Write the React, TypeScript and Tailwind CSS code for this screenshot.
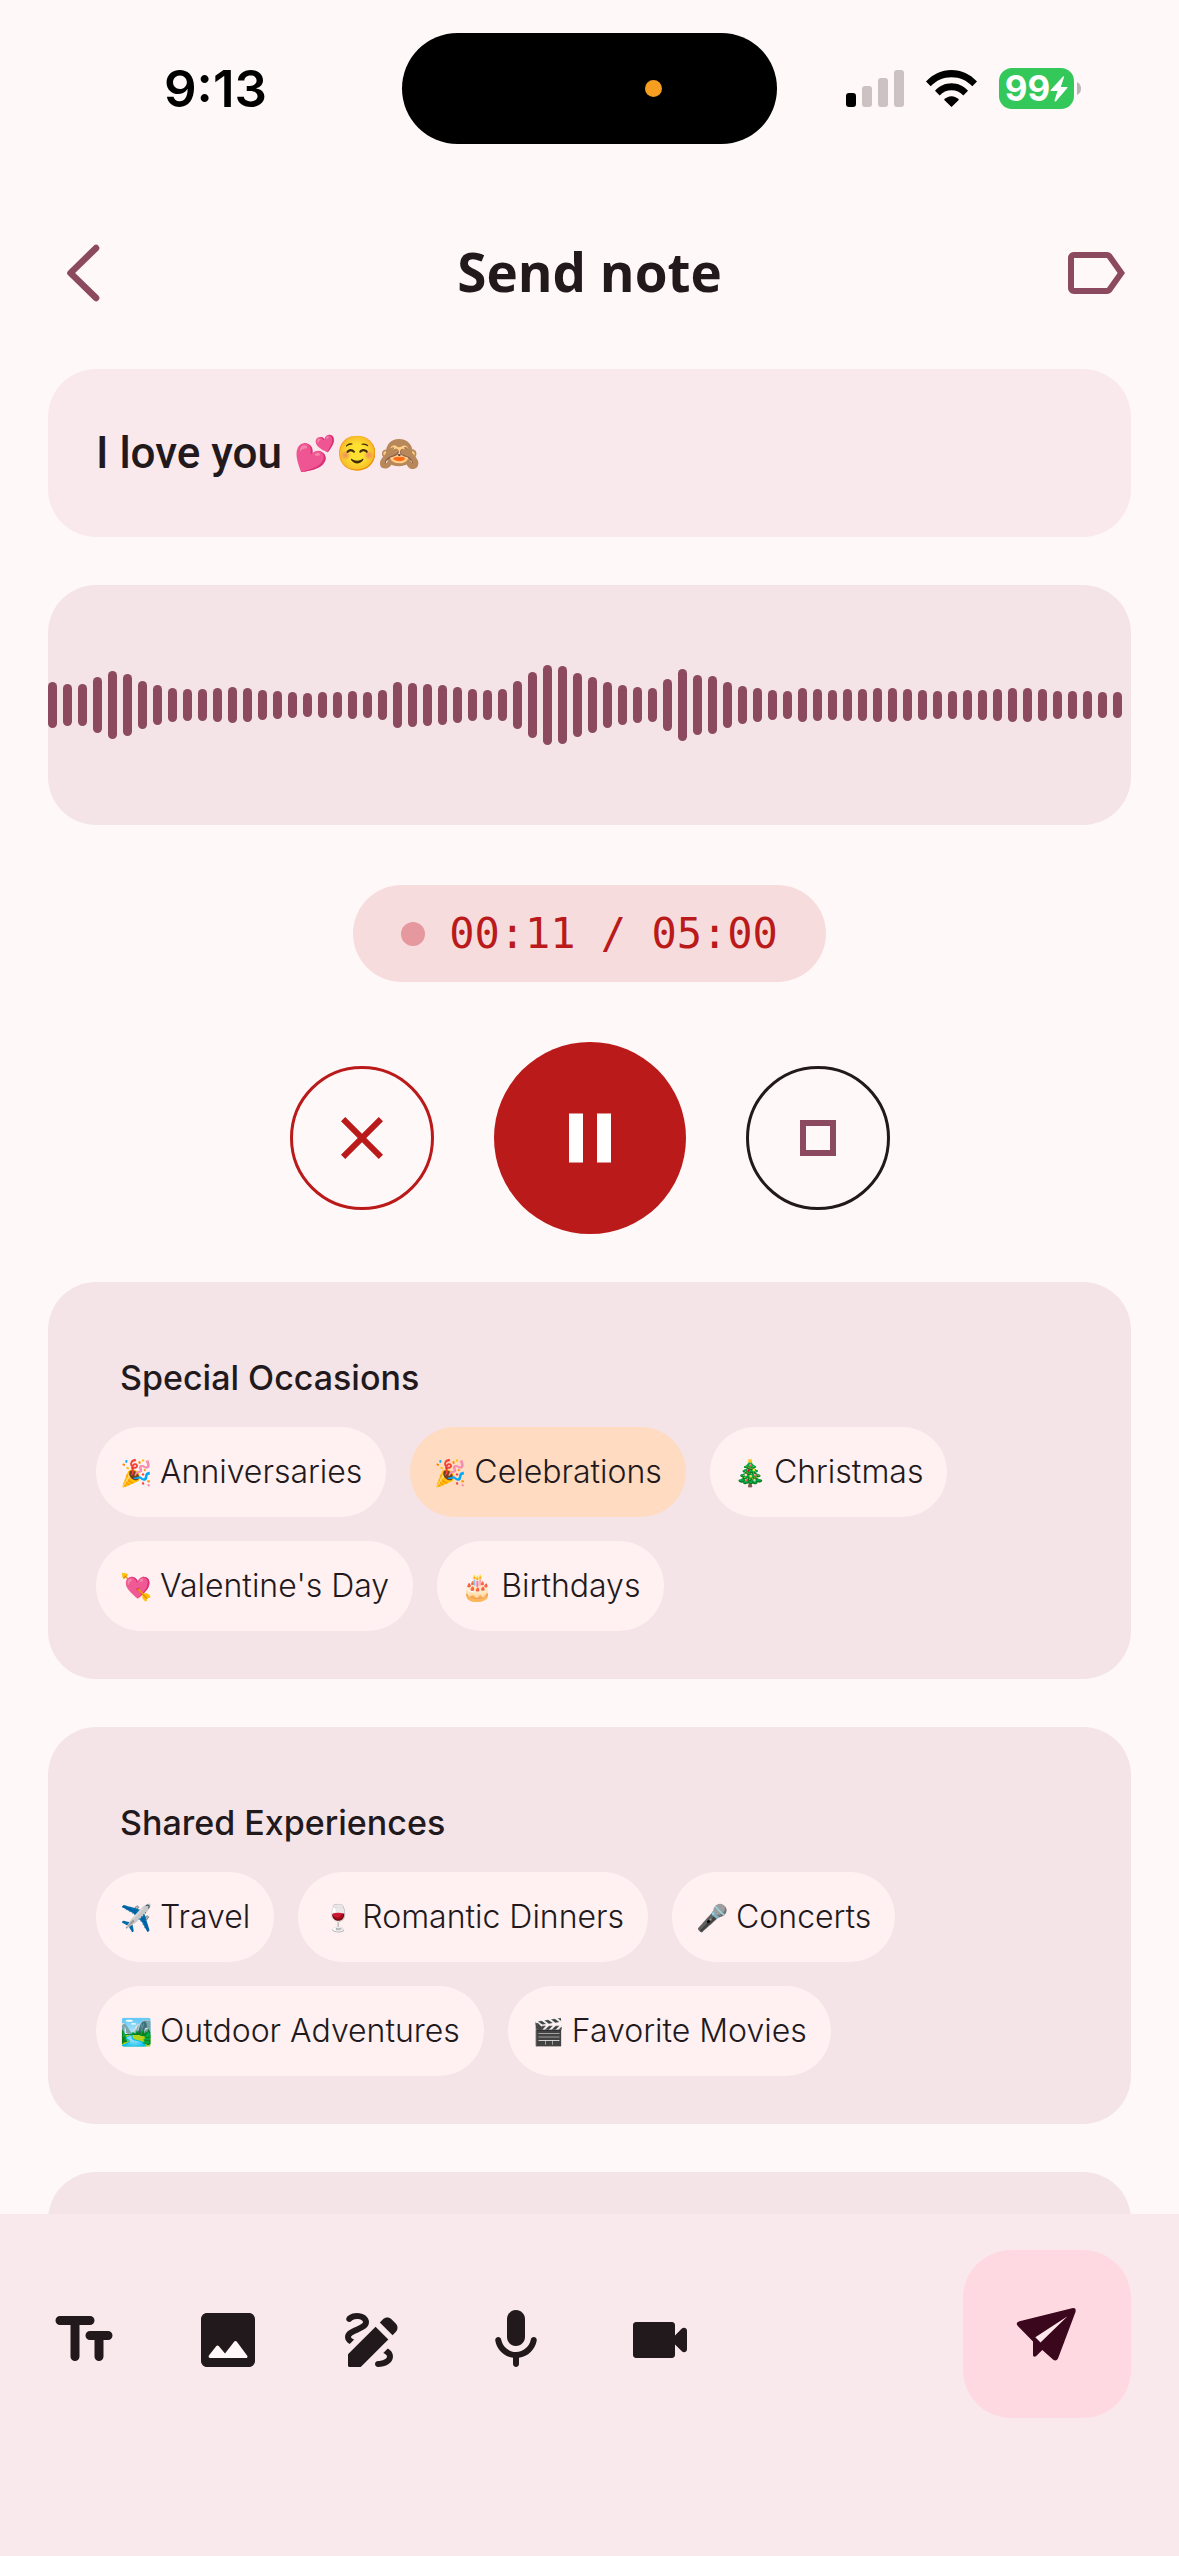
import React, { useState } from 'react';

const waveform = [
  46, 42, 42, 56, 68, 62, 48, 40, 34, 32, 32, 34, 36, 34, 30, 28, 26, 24, 26, 26, 28, 26, 30, 46,
  44, 42, 40, 36, 32, 30, 32, 48, 66, 80, 78, 64, 56, 46, 40, 36, 34, 52, 72, 60, 58, 46, 38, 34,
  30, 28, 34, 32, 30, 32, 32, 34, 34, 32, 30, 28, 28, 30, 30, 32, 34, 34, 32, 28, 28, 28, 26, 26,
];

const categories = [
  {
    title: 'Special Occasions',
    tags: [
      { emoji: '🎉', label: 'Anniversaries' },
      { emoji: '🎉', label: 'Celebrations' },
      { emoji: '🎄', label: 'Christmas' },
      { emoji: '💘', label: "Valentine's Day" },
      { emoji: '🎂', label: 'Birthdays' },
    ],
  },
  {
    title: 'Shared Experiences',
    tags: [
      { emoji: '✈️', label: 'Travel' },
      { emoji: '🍷', label: 'Romantic Dinners' },
      { emoji: '🎤', label: 'Concerts' },
      { emoji: '🏞️', label: 'Outdoor Adventures' },
      { emoji: '🎬', label: 'Favorite Movies' },
    ],
  },
];

interface IconProps {
  className?: string;
  children: React.ReactNode;
}

const Icon: React.FC<IconProps> = ({ className = 'size-[72px]', children }) => (
  <svg viewBox="0 0 24 24" fill="currentColor" aria-hidden="true" className={className}>
    {children}
  </svg>
);

const StatusBar = () => (
  <div className="grid h-[177px] shrink-0 grid-cols-[1fr_375px_1fr] items-center text-black">
    <span className="pl-[164px] font-['Inter'] text-[51px] leading-none font-semibold">9:13</span>
    <div className="flex h-[111px] items-center justify-end rounded-full bg-black pr-[115px]">
      <span className="size-[17px] rounded-full bg-[#f59e1f]" />
    </div>
    <div className="flex items-center justify-end gap-[22px] pr-[98px]">
      <svg viewBox="0 0 58 37" className="h-[37px] w-[58px]" aria-hidden="true">
        <rect x="0" y="23" width="10" height="14" rx="3" />
        <rect x="16" y="16" width="10" height="21" rx="3" fill="#cdc2c3" />
        <rect x="32" y="8" width="10" height="29" rx="3" fill="#cdc2c3" />
        <rect x="48" y="0" width="10" height="37" rx="3" fill="#cdc2c3" />
      </svg>
      <svg viewBox="0 0 51 37" className="h-[37px] w-[51px]" aria-hidden="true">
        <path d="M0 11.5C6.8 4.2 15.6 0 25.5 0S44.2 4.2 51 11.5L46.3 16.2C40.8 10.4 33.6 7.2 25.5 7.2S10.2 10.4 4.7 16.2Z" />
        <path d="M9 20.7C13.4 15.9 19 13.2 25.5 13.2S37.6 15.9 42 20.7L37.3 25.4C34.2 22 30.2 20.2 25.5 20.2S16.8 22 13.7 25.4Z" />
        <path d="M18 29.7C20 27.5 22.6 26.2 25.5 26.2S31 27.5 33 29.7L25.5 37Z" />
      </svg>
      <div className="flex items-center gap-[3px]">
        <div className="flex h-[41px] w-[75px] items-center justify-center rounded-[13px] bg-[#34c759] text-white">
          <span className="font-['Inter'] text-[35px] leading-none font-bold">99</span>
          <svg viewBox="0 0 18 26" className="h-[26px] w-[18px]" fill="currentColor" aria-hidden="true">
            <path d="M13 0.5 0.5 14.2Q0 15 1 15H7.5L4.5 24.5Q4.8 26 6 25.2L17.5 11.8Q18 11 17 11H10.8L14 1.2Q14 0 13 0.5Z" />
          </svg>
        </div>
        <svg viewBox="0 0 4 13" className="h-[13px] w-1" fill="#bdb2b4" aria-hidden="true">
          <path d="M0 0Q4 2 4 6.5T0 13Z" />
        </svg>
      </div>
    </div>
  </div>
);

const Header = () => (
  <header className="flex h-48 shrink-0 items-center justify-between px-12 text-[#8c4a60]">
    <button type="button" aria-label="Back">
      <Icon>
        <path d="M16 3.7 7.5 12 16 20.3" fill="none" stroke="currentColor" strokeWidth="2.2" strokeLinecap="round" strokeLinejoin="round" />
      </Icon>
    </button>
    <h1 className="pb-1 text-[53px] leading-none font-bold text-[#22191c]">Send note</h1>
    <button type="button" aria-label="Label">
      <Icon>
        <path d="M17.63 5.84C17.27 5.33 16.67 5 16 5L5 5.01C3.9 5.01 3 5.9 3 7v10c0 1.1.9 1.99 2 1.99L16 19c.67 0 1.27-.33 1.63-.84L22 12l-4.37-6.16zM16 17H5V7h11l3.55 5L16 17z" />
      </Icon>
    </button>
  </header>
);

const Recorder = () => (
  <div className="flex flex-col items-center">
    <div className="flex h-60 w-full items-center justify-between overflow-hidden rounded-[48px] bg-[#f4e4e7] pr-[9px]">
      {waveform.map((height, index) => (
        <span key={index} className="w-[9px] rounded-full bg-[#8c4a60]" style={{ height }} />
      ))}
    </div>

    <div className="mt-[60px] flex h-[97px] items-center gap-6 rounded-full bg-[#f7dcde] px-12 text-[#ba1a1a]">
      <span className="size-6 rounded-full bg-[#e5989e]" />
      <span className="font-['DejaVu_Sans_Mono',monospace] text-[42px] leading-none whitespace-pre">00:11 / 05:00</span>
    </div>

    <div className="mt-[60px] flex items-center gap-[60px]">
      <button type="button" aria-label="Discard" className="flex size-36 items-center justify-center rounded-full border-3 border-[#ba1a1a] text-[#ba1a1a]">
        <Icon>
          <path d="M19 6.41 17.59 5 12 10.59 6.41 5 5 6.41 10.59 12 5 17.59 6.41 19 12 13.41 17.59 19 19 17.59 13.41 12z" />
        </Icon>
      </button>
      <button type="button" aria-label="Pause" className="flex size-48 items-center justify-center rounded-full bg-[#ba1a1a] text-white">
        <Icon className="size-[84px]">
          <path d="M6 19h4V5H6v14zm8-14v14h4V5h-4z" />
        </Icon>
      </button>
      <button type="button" aria-label="Stop" className="flex size-36 items-center justify-center rounded-full border-3 border-[#22191c] text-[#8c4a60]">
        <Icon>
          <path d="M16 8v8H8V8h8m2-2H6v12h12V6z" />
        </Icon>
      </button>
    </div>
  </div>
);

const Toolbar = () => (
  <footer className="flex h-[342px] shrink-0 items-start justify-between bg-[#fae9ec] px-12 pt-9 text-[#22191c]">
    <nav className="flex gap-[72px] pt-[54px]">
      <button type="button" aria-label="Text">
        <Icon>
          <g fill="none" stroke="currentColor" strokeWidth="3" strokeLinecap="round">
            <path d="M4 5.5h10M9 5.5v12" />
            <path d="M14 10.5h6M17 10.5v7" />
          </g>
        </Icon>
      </button>
      <button type="button" aria-label="Image">
        <Icon>
          <path d="M5.5 12H19v6.5H5.5z" fill="#fff8f8" />
          <path d="M21 19V5c0-1.1-.9-2-2-2H5c-1.1 0-2 .9-2 2v14c0 1.1.9 2 2 2h14c1.1 0 2-.9 2-2zM8.9 13.98l2.1 2.53 3.1-3.99c.2-.26.6-.26.8.01l3.51 4.68c.25.33.01.8-.4.8H6.02c-.42 0-.65-.48-.39-.81L8.12 14c.19-.26.57-.27.78-.02z" />
        </Icon>
      </button>
      <button type="button" aria-label="Draw">
        <Icon>
          <path d="M18.85 10.39l1.06-1.06c.78-.78.78-2.05 0-2.83L18.5 5.09c-.78-.78-2.05-.78-2.83 0l-1.06 1.06 4.24 4.24z" />
          <path d="M13.19 7.56 4 16.76V20.5c0 .28.22.5.5.5h3.74l9.19-9.19-4.24-4.25z" />
          <path d="M19 17.5c0 2.19-2.54 3.5-5 3.5-.55 0-1-.45-1-1s.45-1 1-1c1.54 0 3-.73 3-1.5 0-.47-.48-.87-1.23-1.2l1.48-1.48C18.32 15.45 19 16.29 19 17.5z" />
          <path d="M4.58 13.35C3.61 12.79 3 12.06 3 11c0-1.8 1.89-2.63 3.56-3.36C7.59 7.18 9 6.56 9 6c0-.41-.78-1-2-1-1.26 0-1.8.61-1.83.64-.35.41-.98.46-1.4.12-.41-.34-.49-.95-.15-1.38C3.73 4.24 4.76 3 7 3s4 1.32 4 3c0 1.87-1.93 2.72-3.64 3.47C6.42 9.88 5 10.5 5 11c0 .31.43.6 1.07.86l-1.49 1.49z" />
        </Icon>
      </button>
      <button type="button" aria-label="Voice">
        <Icon>
          <path d="M12 14c1.66 0 3-1.34 3-3V5c0-1.66-1.34-3-3-3S9 3.34 9 5v6c0 1.66 1.34 3 3 3z" />
          <path d="M17.91 11c-.49 0-.9.36-.98.85C16.52 14.2 14.47 16 12 16s-4.52-1.8-4.93-4.15c-.08-.49-.49-.85-.98-.85-.61 0-1.09.54-1 1.14.49 3 2.89 5.35 5.91 5.78V20c0 .55.45 1 1 1s1-.45 1-1v-2.08c3.02-.43 5.42-2.78 5.91-5.78.1-.6-.39-1.14-1-1.14z" />
        </Icon>
      </button>
      <button type="button" aria-label="Video">
        <Icon>
          <path d="M17 10.5V7c0-.55-.45-1-1-1H4c-.55 0-1 .45-1 1v10c0 .55.45 1 1 1h12c.55 0 1-.45 1-1v-3.5l2.29 2.29c.63.63 1.71.18 1.71-.71V8.91c0-.89-1.08-1.34-1.71-.71L17 10.5z" />
        </Icon>
      </button>
    </nav>
    <button type="button" aria-label="Send" className="flex size-[168px] items-center justify-center rounded-[48px] bg-[#ffd9e1] text-[#3a071d]">
      <svg viewBox="0 0 72 72" className="size-[72px]" aria-hidden="true">
        <path d="M24 39.5 57 18 29.5 44.5Z" fill="#ffe9ec" />
        <path
          fill="currentColor"
          fillRule="evenodd"
          d="M61 10.2Q65.5 9.5 64.5 14L47 60.5Q45 64 42 61.5L31.3 52 25 58.3Q22 59.5 22 57V43.4L6.8 28Q4 24.5 8.5 23.3ZM56.5 18.2 24.3 39.2 29.5 44.5Z"
        />
      </svg>
    </button>
  </footer>
);

export default function App() {
  const [selected, setSelected] = useState('Celebrations');

  return (
    <div className="flex h-screen flex-col overflow-hidden bg-[#fff8f8] font-['Open_Sans','Noto_Sans',sans-serif] text-[#22191c]">
      <StatusBar />
      <Header />

      <main className="flex min-h-0 flex-1 flex-col gap-12 overflow-hidden px-12">
        <p className="flex h-[168px] shrink-0 items-center gap-3 rounded-[48px] bg-[#fae9ec] px-12 font-['Roboto','Noto_Color_Emoji',sans-serif] text-[44px] font-medium">
          I love you
          <span className="text-[34px]">💕☺️🙈</span>
        </p>

        <Recorder />

        {categories.map((category) => (
          <section key={category.title} className="shrink-0 rounded-[48px] bg-[#f4e4e7] px-12 pt-[72px] pb-12">
            <h2 className="mb-[25px] px-6 font-['Inter'] text-[34px] leading-[48px] font-medium">{category.title}</h2>
            <div className="flex flex-wrap gap-6">
              {category.tags.map((tag) => (
                <button
                  key={tag.label}
                  type="button"
                  aria-pressed={selected === tag.label}
                  onClick={() => setSelected(tag.label)}
                  className={`flex h-[90px] items-center gap-2 rounded-full px-6 font-['Inter'] text-[32px] font-light ${
                    selected === tag.label ? 'bg-[#ffdbc1]' : 'bg-[#fff0f1]'
                  }`}
                >
                  <span className="w-8 text-[26px]">{tag.emoji}</span>
                  {tag.label}
                </button>
              ))}
            </div>
          </section>
        ))}

        <section className="h-60 shrink-0 rounded-[48px] bg-[#f4e4e7]" />
      </main>

      <Toolbar />
    </div>
  );
}
